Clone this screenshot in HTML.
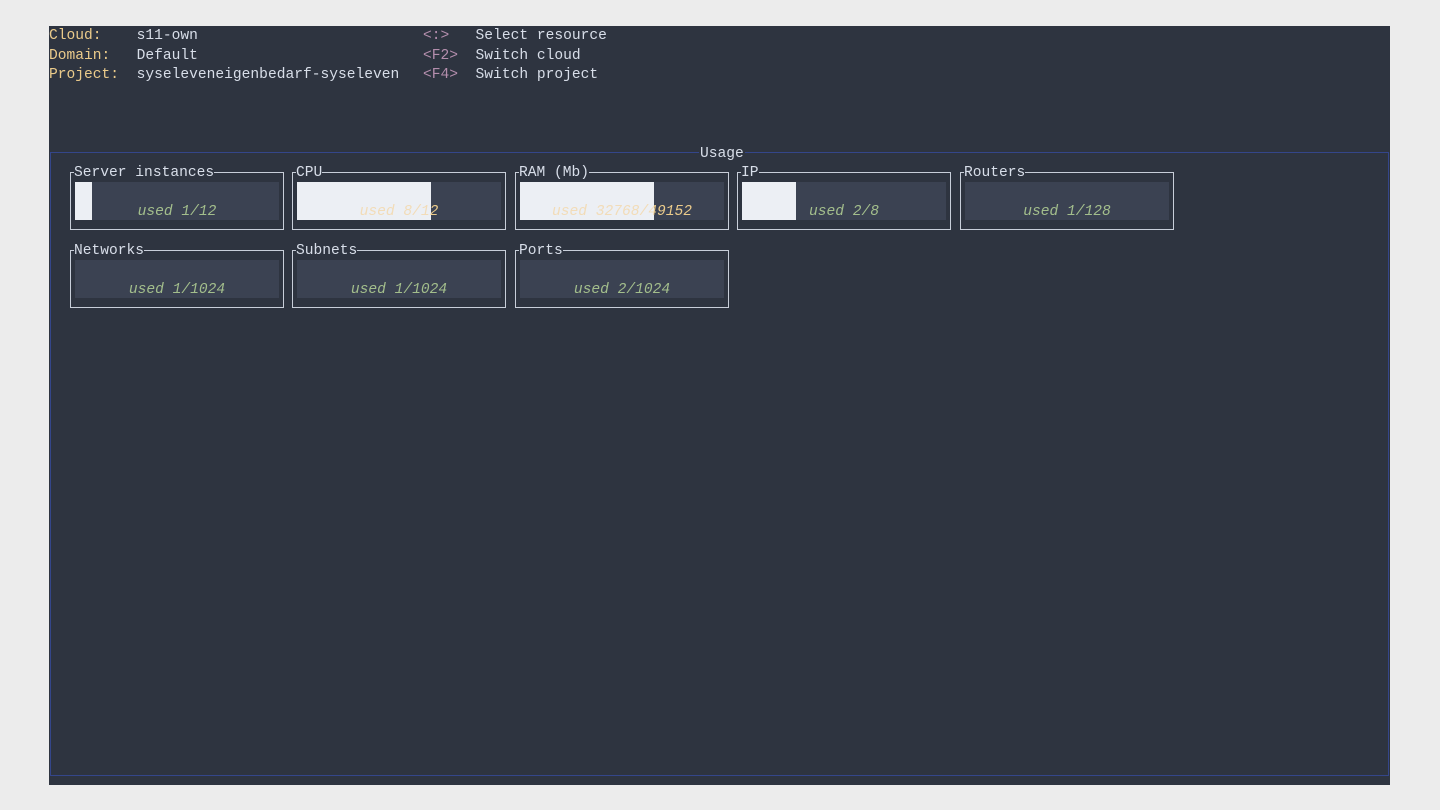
<html><head><style>
body{margin:0;background:#ececec;width:1440px;height:810px;overflow:hidden;font-family:"Liberation Mono","DejaVu Sans Mono",monospace;font-size:14.6px}
#t{position:absolute;left:49px;top:26px;width:1341px;height:759px;background:#2e3440;color:#d8dee9}
.l{position:absolute;white-space:pre;line-height:19.5px}
.y{color:#ebcb8b}.m{color:#b48ead}
#u{position:absolute;left:1px;top:126px;width:1337px;height:622px;border:1px solid #34468a}
#ut{position:absolute;left:648px;top:-8px;background:#2e3440;line-height:19px;padding:0 1px}
.b{position:absolute;width:212px;height:56px;border:1px solid #c8ced9}
.bt{position:absolute;left:3px;top:-9px;background:#2e3440;line-height:19px;white-space:pre}
.g{position:absolute;left:4px;top:9px;width:204px;height:38px;background:#3b4252;overflow:hidden}
.gt{position:absolute;left:0;width:204px;top:21px;line-height:19px;text-align:center;font-style:italic;white-space:pre}
.f{position:absolute;left:0;top:0;height:38px;background:#eceff4;overflow:hidden}
.gr{color:#a3be8c}.ye{color:#ebcb8b}.fa{color:#f2dcb8}
</style></head><body><div id="t">
<div class="l" style="left:0;top:1px"><span class="y">Cloud:    </span>s11-own</div>
<div class="l" style="left:0;top:20.5px"><span class="y">Domain:   </span>Default</div>
<div class="l" style="left:0;top:40px"><span class="y">Project:  </span>syseleveneigenbedarf-syseleven</div>
<div class="l" style="left:374px;top:1px"><span class="m">&lt;:&gt;</span>   Select resource</div>
<div class="l" style="left:374px;top:20.5px"><span class="m">&lt;F2&gt;</span>  Switch cloud</div>
<div class="l" style="left:374px;top:40px"><span class="m">&lt;F4&gt;</span>  Switch project</div>
<div id="u"><div id="ut">Usage</div>
<div class="b" style="left:19px;top:19px"><div class="bt">Server instances</div><div class="g"><div class="f" style="width:17px"></div><div class="gt gr">used 1/12</div></div></div>
<div class="b" style="left:241px;top:19px"><div class="bt">CPU</div><div class="g"><div class="gt ye">used 8/12</div><div class="f" style="width:134px"><div class="gt fa">used 8/12</div></div></div></div>
<div class="b" style="left:464px;top:19px"><div class="bt">RAM (Mb)</div><div class="g"><div class="gt ye">used 32768/49152</div><div class="f" style="width:134px"><div class="gt fa">used 32768/49152</div></div></div></div>
<div class="b" style="left:686px;top:19px"><div class="bt">IP</div><div class="g"><div class="f" style="width:54px"></div><div class="gt gr">used 2/8</div></div></div>
<div class="b" style="left:909px;top:19px"><div class="bt">Routers</div><div class="g"><div class="gt gr">used 1/128</div></div></div>
<div class="b" style="left:19px;top:97px"><div class="bt">Networks</div><div class="g"><div class="gt gr">used 1/1024</div></div></div>
<div class="b" style="left:241px;top:97px"><div class="bt">Subnets</div><div class="g"><div class="gt gr">used 1/1024</div></div></div>
<div class="b" style="left:464px;top:97px"><div class="bt">Ports</div><div class="g"><div class="gt gr">used 2/1024</div></div></div>
</div></div></body></html>
